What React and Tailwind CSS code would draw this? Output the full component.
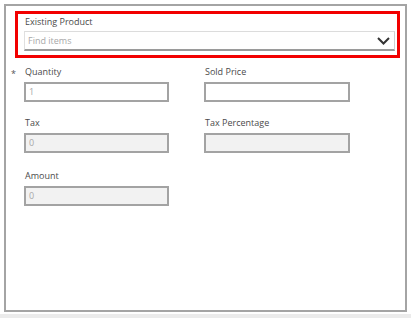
import React from "react";

function Field({ label, value, disabled, required, className = "" }) {
  return (
    <div className={"relative " + className}>
      {required && (
        <span className="absolute -left-[13px] top-[1px] text-[9px] text-[#555]">*</span>
      )}
      <div className="h-[12px] leading-[12px] text-[9px] text-[#4a4a4a] pl-[1px]">{label}</div>
      <div
        className={
          "mt-[4px] h-[20px] border-2 border-[#a3a3a3] flex items-center pl-[3px] text-[9px] text-[#a8a8a8] " +
          (disabled ? "bg-[#f2f2f2]" : "bg-white")
        }
      >
        {value}
      </div>
    </div>
  );
}

export default function App() {
  return (
    <div
      className="w-[411px] h-[318px] bg-[#ebebeb] flex flex-col"
      style={{ fontFamily: '"Open Sans", "Noto Sans", sans-serif' }}
    >
      <div className="bg-white pt-[4px] pl-[4px] pr-[4px] pb-[2px]">
        <div className="h-[308px] border-2 border-[#a4a4a4] bg-white pt-[5px] pl-[9px] pr-[5px]">
          <div className="h-[47px] border-[3px] border-[#f20000] pl-[6px] pr-[2px] pt-[2px]">
            <div className="h-[12px] leading-[12px] text-[9px] text-[#4a4a4a] pl-[1px]">
              Existing Product
            </div>
            <div className="mt-[3px] h-[20px] border-t border-t-[#dcdcdc] border-b-2 border-b-[#9a9a9a] border-l border-l-[#e0e0e0] border-r border-r-[#cfcfcf] flex items-center justify-between pl-[3px] pr-[4px]">
              <span className="text-[9px] text-[#a8a8a8]">Find items</span>
              <svg width="13" height="8" viewBox="0 0 13 8">
                <path d="M1 1 L6.5 6.5 L12 1" fill="none" stroke="#333" strokeWidth="2" />
              </svg>
            </div>
          </div>
          <div className="pl-[9px] mt-[8px]">
            <div className="grid grid-cols-[145px_146px] gap-x-[35px]">
              <Field label="Quantity" value="1" required />
              <Field label="Sold Price" value="" />
            </div>
            <div className="grid grid-cols-[145px_146px] gap-x-[35px] mt-[15px]">
              <Field label="Tax" value="0" disabled />
              <Field label="Tax Percentage" value="" disabled />
            </div>
            <div className="grid grid-cols-[145px_146px] gap-x-[35px] mt-[17px]">
              <Field label="Amount" value="0" disabled />
            </div>
          </div>
        </div>
      </div>
    </div>
  );
}
